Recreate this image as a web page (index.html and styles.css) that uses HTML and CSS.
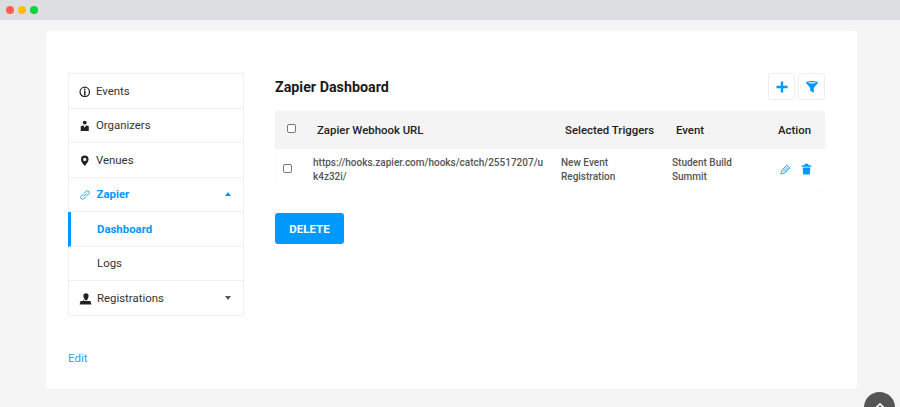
FILE: index.html
```html
<!DOCTYPE html>
<html lang="en">
<head>
<meta charset="utf-8">
<title>Zapier Dashboard</title>
<link rel="stylesheet" href="styles.css">
</head>
<body>
<header class="chrome">
  <span class="dot dot-red"></span><span class="dot dot-yellow"></span><span class="dot dot-green"></span>
</header>
<main class="card">
  <div class="columns">
    <nav class="side">
      <a class="item">
        <svg class="ico" viewBox="0 0 12 12"><circle cx="6" cy="6.2" r="4.9" fill="none" stroke="#222" stroke-width="1.3"/><path d="M6 5v5" stroke="#222" stroke-width="1.6"/><circle cx="6" cy="3.6" r=".9" fill="#222"/></svg>
        <span>Events</span>
      </a>
      <a class="item">
        <svg class="ico" viewBox="0 0 12 12"><circle cx="6" cy="2.7" r="2" fill="#222"/><path d="M1.8 11.4V6.6l2.8-1L6 8l1.400-2.400 2.800 1v4.800z" fill="#222"/></svg>
        <span>Organizers</span>
      </a>
      <a class="item">
        <svg class="ico" viewBox="0 0 12 12"><path fill-rule="evenodd" d="M6 .6a4 4 0 0 1 4 4c0 2.700-2.600 5-4 7-1.400-2-4-4.300-4-7a4 4 0 0 1 4-4zm0 2.300a1.700 1.700 0 1 0 0 3.400 1.700 1.700 0 0 0 0-3.400z" fill="#222"/></svg>
        <span>Venues</span>
      </a>
      <a class="item item-active">
        <svg class="ico ico-link" viewBox="0 0 12 12"><path d="M4.600 7.400 7.400 4.600M4.400 5 2 7.400a1.900 1.900 0 0 0 2.600 2.600L7 7.600M5 4.400 7.400 2A1.900 1.900 0 0 1 10 4.600L7.600 7" fill="none" stroke="#0099ff" stroke-width=".9"/></svg>
        <span class="label-strong">Zapier</span>
        <span class="caret caret-up"></span>
      </a>
      <a class="sub sub-active">Dashboard</a>
      <a class="sub">Logs</a>
      <a class="item item-reg">
        <svg class="ico ico-wide" viewBox="0 0 13 12"><path d="M4.400 2.800a2.600 2.600 0 0 1 5.200 0c0 1.500-.6 2.600-1.200 3.200v1.200H5.600V6c-.6-.6-1.200-1.700-1.200-3.200z" fill="#222"/><path d="M4.500 6.500 3.800 8H1.500L.6 11.400h11.800L11.500 8H5z" fill="#222"/></svg>
        <span>Registrations</span>
        <span class="caret caret-down"></span>
      </a>
    </nav>
    <section class="content">
      <div class="head">
        <h1 class="title">Zapier Dashboard</h1>
        <div class="tools">
          <button class="tool" aria-label="Add"><svg viewBox="0 0 12 12" class="tool-ico"><path d="M6 .5v11M.5 6h11" stroke="#0099ff" stroke-width="2.4"/></svg></button>
          <button class="tool" aria-label="Filter"><svg viewBox="0 0 12 12" class="tool-ico"><path d="M0 1.800C0 .7 2.700 0 6 0s6 .7 6 1.800c0 .4-.3.7-.7 1L7.800 6.800v5L4.200 9.800v-3L.7 2.800c-.4-.3-.7-.6-.7-1z" fill="#0099ff"/><ellipse cx="6" cy="1.700" rx="4" ry=".7" fill="#cfe9ff"/></svg></button>
        </div>
      </div>
      <div class="table">
        <div class="row row-head">
          <span class="c-check c-check-head"><input type="checkbox" class="box"></span>
          <span class="c-url c-url-head">Zapier Webhook URL</span>
          <span class="c-trig c-trig-head">Selected Triggers</span>
          <span class="c-event c-event-head">Event</span>
          <span class="c-action c-action-head">Action</span>
        </div>
        <div class="row row-body">
          <span class="c-check"><input type="checkbox" class="box"></span>
          <span class="c-url">https://hooks.zapier.com/hooks/catch/25517207/uk4z32i/</span>
          <span class="c-trig">New Event Registration</span>
          <span class="c-event">Student Build Summit</span>
          <span class="c-action c-icons">
            <svg class="act act-edit" viewBox="0 0 12 12"><path d="M.8 11.200l1.200-3.800L7.400 1.800l.9.700.9.400.900.900.600 1-5.600 5.700zM3.200 8.800 8.300 3.300M4.800 9.600 10 4.300" fill="none" stroke="#0099ff" stroke-width=".9"/></svg>
            <svg class="act" viewBox="0 0 12 13"><path d="M.8 2.400h10.400v1.600H.8zM4 .8h4v1.800H4zM1.800 4.800h8.400l-.6 7.600H2.400z" fill="#0099ff"/></svg>
          </span>
        </div>
      </div>
      <button class="delete">DELETE</button>
    </section>
  </div>
  <a class="edit">Edit</a>
</main>
<div class="to-top"><svg viewBox="0 0 12 8" class="to-top-ico"><path d="M1.500 6.500 6 2l4.500 4.500" fill="none" stroke="#fff" stroke-width="2"/></svg></div>
</body>
</html>
```

FILE: styles.css
```css
* { box-sizing: border-box; }
html, body { margin: 0; height: 407px; overflow: hidden; }
body {
  position: relative;
  background: #f5f5f5;
  font-family: Roboto, "Liberation Sans", sans-serif;
  color: #222;
}
.chrome {
  height: 20px;
  background: #dcdde0;
  display: flex;
  align-items: center;
  gap: 4px;
  padding-left: 6px;
}
.dot { width: 8px; height: 8px; border-radius: 50%; }
.dot-red { background: #ff5f52; }
.dot-yellow { background: #ffbd13; }
.dot-green { background: #10d13f; }
.card {
  margin: 11px 43px 0 46px;
  height: 358px;
  background: #fff;
  border-radius: 4px;
  padding: 42px 32px 0 22px;
}
.columns { display: flex; gap: 31px; align-items: flex-start; }
.side {
  width: 176px;
  flex: none;
  border: 1px solid #eeeeee;
  display: flex;
  flex-direction: column;
}
.item, .sub {
  height: 34.5px;
  display: flex;
  align-items: center;
  font-size: 11.4px;
  color: #333;
  border-bottom: 1px solid #f0f0f0;
}
.item { padding: 0 12px 0 9.5px; }
.item:last-child { border-bottom: 0; height: 34px; }
.ico { width: 11.5px; height: 11.5px; margin-right: 6px; flex: none; margin-top: 1px; }
.ico-link { width: 12px; height: 12px; margin-right: 6px; }
.ico-wide { width: 13px; height: 12px; margin-right: 5.5px; }
.item-active { color: #0099ff; }
.label-strong { font-weight: 700; }
.caret { margin-left: auto; width: 0; height: 0; border-left: 3px solid transparent; border-right: 3px solid transparent; }
.caret-up { border-bottom: 4px solid #0099ff; }
.caret-down { border-top: 4px solid #555; }
.sub { padding-left: 28px; }
.sub-active {
  color: #0099ff;
  font-weight: 700;
  border-left: 3px solid #0099ff;
  margin-left: -1px;
  padding-left: 26px;
}
.content { width: 550px; flex: none; }
.head { display: flex; justify-content: space-between; align-items: flex-start; height: 38px; }
.title { margin: 5px 0 0; font-size: 14.3px; line-height: 18px; font-weight: 700; color: #1c1c1c; }
.tools { display: flex; gap: 3px; }
.tool {
  width: 27px;
  height: 27px;
  padding: 0;
  background: #fff;
  border: 1px solid #eeeeee;
  border-radius: 3px;
  display: flex;
  align-items: center;
  justify-content: center;
}
.tool-ico { width: 12px; height: 12px; }
.table { border-radius: 4px; box-shadow: 0 0 2px rgba(0, 0, 0, .06); }
.row { display: grid; grid-template-columns: 38px 248px 111px 95px 58px; align-items: center; }
.row-head {
  height: 38px;
  padding-bottom: 1px;
  background: #f4f4f4;
  border-radius: 4px 4px 0 0;
  font-size: 11.4px;
  font-weight: 500;
  color: #222;
}
.row-body {
  height: 42px;
  font-size: 10px;
  line-height: 14px;
  font-weight: 500;
  color: #555;
}
.c-url { overflow-wrap: anywhere; padding-right: 16px; }
.c-url-head { padding: 0 0 0 4px; }
.c-trig { padding-right: 30px; }
.c-trig-head { padding: 0 0 0 4px; white-space: nowrap; }
.c-event { padding-right: 20px; }
.c-event-head { padding-left: 4px; }
.c-action-head { padding-left: 11px; }
.c-check { display: flex; padding-left: 8px; margin-bottom: 3px; }
.c-check-head { padding-left: 12px; margin-bottom: 2px; }
.box { margin: 0; width: 9px; height: 9px; appearance: none; background: #fff; border: 1px solid #777; border-radius: 2px; }
.c-icons { display: flex; gap: 10px; padding-left: 13px; align-items: center; margin-bottom: 2px; }
.act { width: 11px; height: 12px; }
.delete {
  display: block;
  margin-top: 22px;
  width: 69px;
  height: 31px;
  border: 0;
  border-radius: 3px;
  background: #0099ff;
  color: #fff;
  font: 700 11.5px Roboto, "Liberation Sans", sans-serif;
}
.edit {
  display: block;
  margin-top: 34.5px;
  font-size: 11.5px;
  line-height: 14px;
  color: #2f9ff0;
}
.to-top {
  position: absolute;
  left: 864px;
  top: 392px;
  width: 31px;
  height: 31px;
  border-radius: 50%;
  background: #555;
  display: flex;
  justify-content: center;
  padding-top: 10px;
}
.to-top-ico { width: 10px; height: 7px; }
```
